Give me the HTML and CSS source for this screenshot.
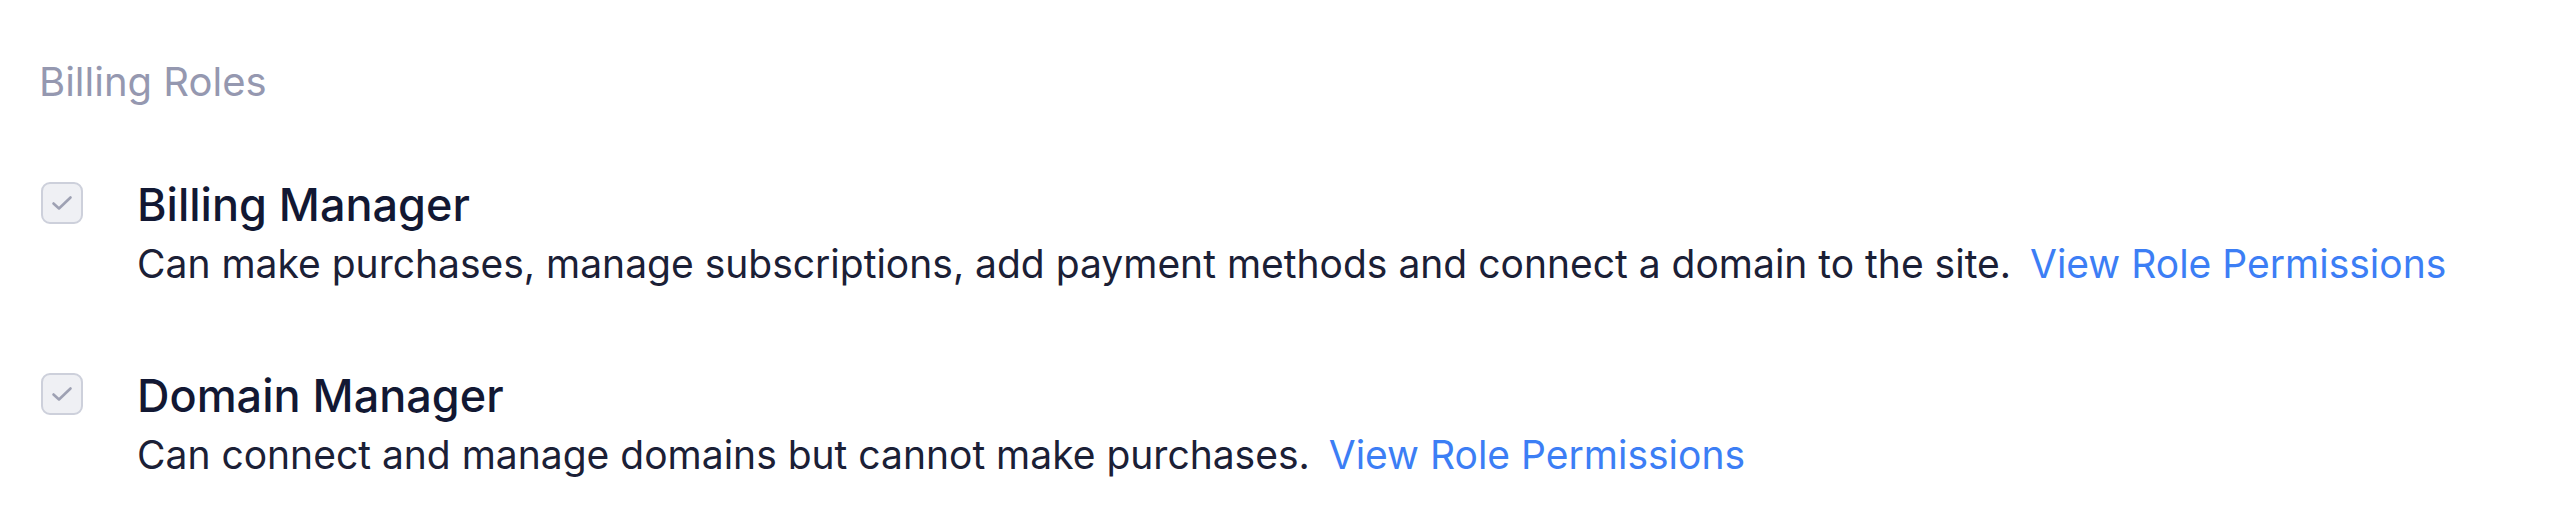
FILE: index.html
```html
<!DOCTYPE html>
<html>
<head>
<meta charset="utf-8">
<title>Billing Roles</title>
<link rel="stylesheet" href="styles.css">
</head>
<body>
<section class="roles">
  <h2 class="roles-heading">Billing Roles</h2>
  <ul class="role-list">
    <li class="role">
      <span class="checkbox" aria-checked="true" role="checkbox" aria-disabled="true">
        <svg viewBox="0 0 42 42" width="42" height="42"><path d="M12.5 21.5 L18 26.5 L29.5 15.5" fill="none" stroke="#9ea1b3" stroke-width="2.6" stroke-linecap="round" stroke-linejoin="round"/></svg>
      </span>
      <div class="role-text">
        <div class="role-title">Billing Manager</div>
        <div class="role-desc">Can make purchases, manage subscriptions, add payment methods and connect a domain to the site. <a class="role-link" href="#">View Role Permissions</a></div>
      </div>
    </li>
    <li class="role">
      <span class="checkbox" aria-checked="true" role="checkbox" aria-disabled="true">
        <svg viewBox="0 0 42 42" width="42" height="42"><path d="M12.5 21.5 L18 26.5 L29.5 15.5" fill="none" stroke="#9ea1b3" stroke-width="2.6" stroke-linecap="round" stroke-linejoin="round"/></svg>
      </span>
      <div class="role-text">
        <div class="role-title">Domain Manager</div>
        <div class="role-desc">Can connect and manage domains but cannot make purchases. <a class="role-link" href="#">View Role Permissions</a></div>
      </div>
    </li>
  </ul>
</section>
</body>
</html>
```
FILE: styles.css
```css
html, body {
  margin: 0;
  background: #ffffff;
}
body {
  font-family: Inter, "Noto Sans", sans-serif;
}
.roles {
  padding: 58px 40px 0 39px;
}
.roles-heading {
  margin: 0;
  font-size: 40px;
  line-height: 48px;
  font-weight: 400;
  color: #9598b0;
}
.role-list {
  list-style: none;
  margin: 75px 0 0;
  padding: 0;
  display: flex;
  flex-direction: column;
  gap: 81px;
}
.role {
  display: flex;
  align-items: flex-start;
  gap: 54px;
  padding-left: 2px;
}
.checkbox {
  flex: none;
  box-sizing: border-box;
  width: 42px;
  height: 42px;
  margin-top: 1px;
  border: 2px solid #cdd0db;
  border-radius: 9px;
  background: #eff0f4;
  display: flex;
  align-items: center;
  justify-content: center;
}
.checkbox svg {
  display: block;
  width: 42px;
  height: 42px;
  flex: none;
}
.role-text {
  display: flex;
  flex-direction: column;
  gap: 8px;
}
.role-title {
  font-size: 45px;
  line-height: 48px;
  font-weight: 500;
  color: #121833;
}
.role-desc {
  font-size: 39px;
  line-height: 54px;
  color: #1b2036;
  white-space: pre-wrap;
}
.role-link {
  color: #3c7ef5;
  text-decoration: none;
  margin-left: 8px;
}
```
